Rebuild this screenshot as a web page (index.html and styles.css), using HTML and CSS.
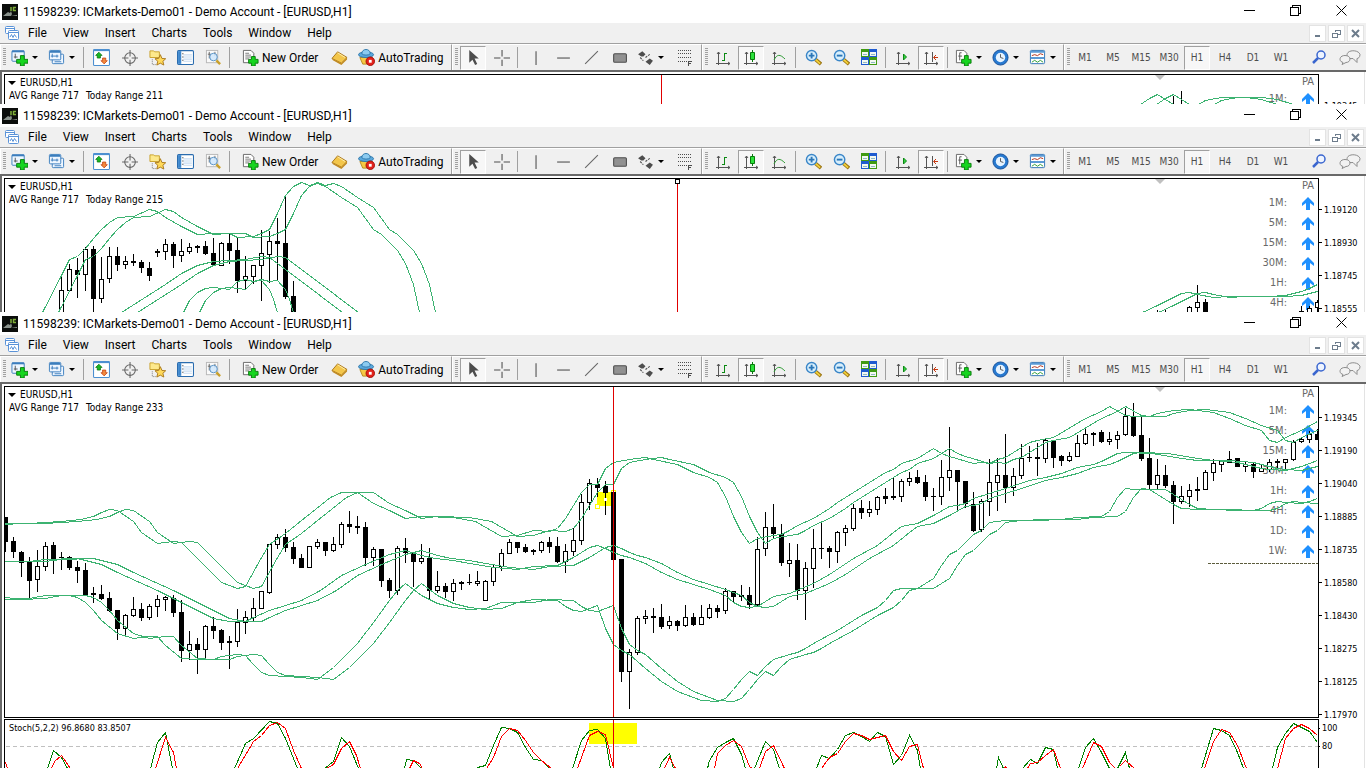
FILE: index.html
```
<!DOCTYPE html>
<html lang="en">
<head>
  <meta charset="UTF-8">
  <meta name="viewport" content="width=device-width, initial-scale=1.0">
  <title>11598239: ICMarkets-Demo01</title>
  <link rel="stylesheet" href="styles.css">
</head>
<body>
  <svg class="sprite" aria-hidden="true">
    <symbol id="i-logo" viewBox="0 0 16 16"><path fill="#0b0d0b" d="M0 0h16v16H0z"/><path fill="#8a928c" d="M1 12l5-4 2 1 1-2 1 3-1 2 6-1v1z"/><path stroke="#7fae3a" stroke-width="1.500" fill="none" d="M9 3v4M14 3.500h-2.500v3H14"/></symbol>
    <symbol id="i-mdi" viewBox="0 0 16 16"><g fill="#fff" stroke="#5b93d8"><rect x="1.500" y="1.500" width="9" height="7" rx="1"/><rect x="4.500" y="5.500" width="10" height="9" rx="1"/><path d="M1.500 3.500h9M4.500 7.500h10M6 12l1.500-2.500L9 12.500l1.500-3 2 3" fill="none"/></g></symbol>
    <symbol id="i-newchart" viewBox="0 0 18 18"><rect x="1" y="2" width="13" height="11" rx="1" fill="#eef6ff" stroke="#3b7dbd"/><path d="M1 2.500h13" stroke="#3b7dbd" stroke-width="2"/><path d="M4.500 5v5M3 8.500h4" stroke="#555"/><path d="M10 7h4v4h4v4h-4v3h-4v-3H6v-4h4z" fill="#16d51f" stroke="#087a0c"/></symbol>
    <symbol id="i-profiles" viewBox="0 0 18 18"><g fill="#eef6ff" stroke="#3b7dbd"><rect x="4.500" y="5.500" width="12" height="10" rx="1"/><rect x="1.500" y="1.500" width="12" height="10" rx="1"/><path d="M2 3h11" stroke-width="2"/></g><path d="M4.500 5v4M3 7.500h8M9.500 6v3M7 13.500h7" stroke="#3b7dbd"/></symbol>
    <symbol id="i-market" viewBox="0 0 16 16"><rect x=".5" y=".5" width="15" height="15" rx="1" fill="#fff" stroke="#4c8fd0"/><path d="M.5 1h15" stroke="#4c8fd0" stroke-width="2"/><path d="M5.500 3l3 3H7v2.500H4V6H2.500z" fill="#18b825" stroke="#08720d" stroke-width=".7"/><path d="M10.500 14l-3-3H9V8.500h3V11h1.500z" fill="#f28a3d" stroke="#c23c0c" stroke-width=".7"/></symbol>
    <symbol id="i-nav" viewBox="0 0 16 16"><g fill="none" stroke="#666"><circle cx="8.500" cy="8.500" r="5"/><path d="M8.500 1v6M8.500 10v6M1 8.500h6M10 8.500h6"/></g></symbol>
    <symbol id="i-star" viewBox="0 0 18 18"><path d="M1 2h4l1 1h5v6H1z" fill="#fde98c" stroke="#c9a12c"/><path d="M3.500 11v5.500H8" stroke="#777" stroke-dasharray="1 1" fill="none"/><path d="M12 6l1.700 4 4 .3-3 2.700 1 4L12 15l-3.700 2 1-4-3-2.700 4-.3z" fill="#ffd95a" stroke="#a9781b"/></symbol>
    <symbol id="i-data" viewBox="0 0 16 16"><rect x=".5" y="1.500" width="15" height="13" rx="1" fill="#fff" stroke="#2a6cae"/><path d="M1 2h3v12H1z" fill="#3d87cd"/><path d="M6 5.500h8M6 7.500h8M6 9.500h8M6 11.500h8" stroke="#c6dcf2"/><path d="M5 4.500h1M5 7.500h1M5 10.500h1" stroke="#333"/></symbol>
    <symbol id="i-tester" viewBox="0 0 18 18"><rect x="1.500" y="1.500" width="12" height="13" fill="#fafafa" stroke="#b8b8b8"/><path d="M4.500 3v7M10.500 3v4M3 5.500h3" stroke="#666"/><circle cx="9" cy="8.500" r="4" fill="#cfe6fb" fill-opacity=".85" stroke="#5790c4"/><path d="M12 12l4 4" stroke="#c9a02b" stroke-width="2.500"/></symbol>
    <symbol id="i-order" viewBox="0 0 18 18"><path d="M1.500 1.500h8l3 3v10h-11z" fill="#fff" stroke="#666"/><path d="M3.500 4.500h4M3.500 6.500h6M3.500 8.500h6M3.500 10.500h4" stroke="#777"/><path d="M10 8h4v3h3v4h-3v3h-4v-3H7v-4h3z" fill="#16d51f" stroke="#087a0c"/></symbol>
    <symbol id="i-gold" viewBox="0 0 18 18"><path d="M7 3l10 6-6 6-10-5z" fill="#f3c64b" stroke="#a8741a"/><path d="M1 10l10 5v2L2 12zM11 15l6-6v2l-6 6z" fill="#c18a20"/><path d="M7 4l8 5" stroke="#fff0b0"/></symbol>
    <symbol id="i-auto" viewBox="0 0 18 18"><path d="M2 9l3 7h7l3-7z" fill="#f5c944" stroke="#b98a1e"/><ellipse cx="8.500" cy="6" rx="8" ry="3" fill="#5aa8dc" stroke="#2f78ab"/><path d="M4 5c0-6 9-6 9 0-2 2-7 2-9 0z" fill="#8ccbf0" stroke="#2f78ab"/><circle cx="13" cy="13" r="4.500" fill="#e3221b" stroke="#a30f0a"/><path d="M11.500 11.500h3v3h-3z" fill="#fff"/></symbol>
    <symbol id="i-cursor" viewBox="0 0 16 16"><path d="M4 1v12l3-3 2.500 5 2-1L9 9h4z" fill="#4d4d4d"/></symbol>
    <symbol id="i-cross" viewBox="0 0 16 16"><path d="M8.500 1v6M8.500 10v6M1 8.500h6M10 8.500h6" stroke="#4d4d4d"/></symbol>
    <symbol id="i-vline" viewBox="0 0 16 16"><path d="M8.500 2v13" stroke="#4d4d4d"/></symbol>
    <symbol id="i-hline" viewBox="0 0 16 16"><path d="M2 8.500h12" stroke="#4d4d4d"/></symbol>
    <symbol id="i-trend" viewBox="0 0 16 16"><path d="M2 14L14 2" stroke="#666"/></symbol>
    <symbol id="i-rect" viewBox="0 0 16 16"><rect x="2.500" y="4.500" width="12" height="8" rx="1" fill="#919191" stroke="#4d4d4d"/></symbol>
    <symbol id="i-shapes" viewBox="0 0 16 16"><path d="M5 2l3 3-2 2H4L1 5zM12 9l3 2-3 4-4-3z" fill="#4d4d4d"/><path d="M3 8l3 3M8 8l4-3" stroke="#4d4d4d" stroke-dasharray="2 1"/></symbol>
    <symbol id="i-fibo" viewBox="0 0 17 17"><path d="M2 1.500h14M2 4.500h14M2 8.500h14M2 12.500h9" stroke="#4d4d4d" stroke-dasharray="1 1"/><path d="M12.500 17v-5M12 12.500h4M12 14.500h3" stroke="#4d4d4d" fill="none"/></symbol>
    <symbol id="i-bars" viewBox="0 0 17 17"><path d="M3.500 3v13M1 14.500h14M2 5l1.500-2L5 5M13 13l2 1.500-2 1.500" stroke="#555" fill="none"/><path d="M9.500 4v8M7 11.500h2M9.500 4.500H12" stroke="#0b8a12"/></symbol>
    <symbol id="i-candle" viewBox="0 0 17 17"><path d="M3.500 3v13M1 14.500h14M2 5l1.500-2L5 5M13 13l2 1.500-2 1.500" stroke="#555" fill="none"/><path d="M9.500 1v12" stroke="#087a0c"/><path d="M7.500 3.500h4v7h-4z" fill="#2be23a" stroke="#087a0c"/></symbol>
    <symbol id="i-line" viewBox="0 0 17 17"><path d="M3.500 3v13M1 14.500h14M2 5l1.500-2L5 5M13 13l2 1.500-2 1.500" stroke="#555" fill="none"/><path d="M3 11c3-6 6-6 11-1" stroke="#2f9b35" fill="none"/></symbol>
    <symbol id="i-zoomin" viewBox="0 0 18 18"><path d="M11 11l6 5" stroke="#9a7413" stroke-width="4"/><path d="M11 11l5 4.500" stroke="#f3d13b" stroke-width="2"/><circle cx="7" cy="7" r="5.500" fill="#d8effc" stroke="#3a86c8" stroke-width="1.500"/><path d="M4 7h6M7 4v6" stroke="#2c77b8" stroke-width="2"/></symbol>
    <symbol id="i-zoomout" viewBox="0 0 18 18"><path d="M11 11l6 5" stroke="#9a7413" stroke-width="4"/><path d="M11 11l5 4.500" stroke="#f3d13b" stroke-width="2"/><circle cx="7" cy="7" r="5.500" fill="#d8effc" stroke="#3a86c8" stroke-width="1.500"/><path d="M4 7h6" stroke="#2c77b8" stroke-width="2"/></symbol>
    <symbol id="i-tile" viewBox="0 0 17 17"><path d="M0 0h8v8H0zM8 8h8v8H8z" fill="#3f9a12"/><path d="M8 0h8v8H8zM0 8h8v8H0z" fill="#1f5bd0"/><path d="M1 3h6v4H1zM9 3h6v4H9zM1 11h6v4H1zM9 11h6v4H9z" fill="#f3f8f0"/><path d="M2 5.500h4M10 5.500h4M2 13.500h4M10 13.500h4" stroke="#8fb9c4"/></symbol>
    <symbol id="i-scroll" viewBox="0 0 17 17"><path d="M3.500 3v13M1 14.500h14M2 5l1.500-2L5 5M13 13l2 1.500-2 1.500" stroke="#555" fill="none"/><path d="M8.500 5v6l3-3z" fill="#35d042" stroke="#0b8a12"/></symbol>
    <symbol id="i-shift" viewBox="0 0 17 17"><path d="M3.500 3v13M1 14.500h14M2 5l1.500-2L5 5M9.500 3v10M13 13l2 1.500-2 1.500" stroke="#555" fill="none"/><path d="M15 8.500h-4M13 6l-2.500 2.500L13 11" stroke="#c8380f" fill="none"/></symbol>
    <symbol id="i-indicator" viewBox="0 0 18 18"><path d="M1.500 1.500h8l3 3v10h-11z" fill="#fff" stroke="#666"/><path d="M7 4H5v8M3.500 7.500h4" stroke="#555" fill="none"/><path d="M10 7h4v4h3v4h-3v3h-4v-3H7v-4h3z" fill="#16d51f" stroke="#087a0c"/></symbol>
    <symbol id="i-clock" viewBox="0 0 18 18"><circle cx="9" cy="9" r="8" fill="#2779d0" stroke="#164f96"/><circle cx="9" cy="9" r="5" fill="#e6f3ff"/><path d="M9 5.500V9l3 1" stroke="#555" fill="none"/></symbol>
    <symbol id="i-template" viewBox="0 0 18 18"><rect x="1.500" y="1.500" width="15" height="14" rx="1" fill="#fff" stroke="#2f73b5"/><path d="M1 3h16M2 9.500h14" stroke="#5b9ad5" stroke-width="2"/><path d="M3 7l3-1 3 1 3-2 3 1" stroke="#b12d15" fill="none"/><path d="M3 14l3-2 3 2 3-2 3 2" stroke="#2c9b31" fill="none"/></symbol>
    <symbol id="i-search" viewBox="0 0 17 17"><circle cx="10" cy="6" r="4" fill="#eef4ff" stroke="#3a66cf" stroke-width="1.500"/><path d="M7 9l-5 5" stroke="#3a66cf" stroke-width="2.500"/></symbol>
    <symbol id="i-chat" viewBox="0 0 22 16"><g fill="#f2f2f2" stroke="#8c8c8c"><path d="M9 3c3-3 11-2 12 2 0 3-2 4-3 4v4l-4-4c-6 1-7-4-5-6z"/><path d="M6 6c-5 0-6 4-4 6l2 1-1 2 4-2c5 0 6-7-1-7z"/></g></symbol>
    <symbol id="i-up" viewBox="0 0 12 13"><path d="M6 0l6 6v3L8 6v7H4V6L0 9V6z" fill="#1e90ff"/></symbol>
  </svg>

  <main class="desk" id="desk"></main>

  <template id="windowTemplate">
    <section class="window">
      <header class="titlebar">
        <svg class="logo"><use href="#i-logo"/></svg>
        <h1>11598239: ICMarkets-Demo01 - Demo Account - [EURUSD,H1]</h1>
        <div class="caption">
          <button type="button" aria-label="Minimize"><svg viewBox="0 0 11 11"><path d="M0 5.500h11"/></svg></button>
          <button type="button" aria-label="Restore"><svg viewBox="0 0 11 11"><path d="M.5 2.500h8v8h-8zM2.500 2.500v-2h8v8h-2"/></svg></button>
          <button type="button" aria-label="Close"><svg viewBox="0 0 11 11"><path class="smooth" d="M.5.5l10 10M10.500.5l-10 10"/></svg></button>
        </div>
      </header>

      <nav class="menubar">
        <svg class="menu-icon"><use href="#i-mdi"/></svg>
        <button type="button">File</button>
        <button type="button">View</button>
        <button type="button">Insert</button>
        <button type="button">Charts</button>
        <button type="button">Tools</button>
        <button type="button">Window</button>
        <button type="button">Help</button>
        <div class="mdi">
          <button type="button" aria-label="Minimize chart"><svg viewBox="0 0 9 9"><path d="M2 7h5" stroke-width="2"/></svg></button>
          <button type="button" aria-label="Restore chart"><svg viewBox="0 0 9 9"><path d="M.5 4.500h5v4h-5zM.5 4h5M3 3V1.500h5v4H6M3 1h5"/></svg></button>
          <button type="button" aria-label="Close chart"><svg viewBox="0 0 9 9"><path class="smooth" d="M1 1l7 7M8 1L1 8" stroke-width="2"/></svg></button>
        </div>
      </nav>

      <div class="toolbar">
        <div class="group group-main">
          <button type="button" class="tool drop" aria-label="New chart"><svg><use href="#i-newchart"/></svg></button>
          <button type="button" class="tool drop" aria-label="Profiles"><svg><use href="#i-profiles"/></svg></button>
          <span class="sep"></span>
          <button type="button" class="tool" aria-label="Market Watch"><svg><use href="#i-market"/></svg></button>
          <button type="button" class="tool" aria-label="Data Window"><svg><use href="#i-nav"/></svg></button>
          <button type="button" class="tool" aria-label="Navigator"><svg><use href="#i-star"/></svg></button>
          <button type="button" class="tool" aria-label="Terminal"><svg><use href="#i-data"/></svg></button>
          <button type="button" class="tool" aria-label="Strategy Tester"><svg><use href="#i-tester"/></svg></button>
          <span class="sep"></span>
          <button type="button" class="tool wide"><svg><use href="#i-order"/></svg>New Order</button>
          <button type="button" class="tool" aria-label="MetaEditor"><svg><use href="#i-gold"/></svg></button>
          <button type="button" class="tool wide"><svg><use href="#i-auto"/></svg>AutoTrading</button>
        </div>
        <div class="group group-draw">
          <button type="button" class="tool pressed" aria-label="Cursor"><svg><use href="#i-cursor"/></svg></button>
          <button type="button" class="tool" aria-label="Crosshair"><svg><use href="#i-cross"/></svg></button>
          <span class="sep"></span>
          <button type="button" class="tool" aria-label="Vertical line"><svg><use href="#i-vline"/></svg></button>
          <button type="button" class="tool" aria-label="Horizontal line"><svg><use href="#i-hline"/></svg></button>
          <button type="button" class="tool" aria-label="Trendline"><svg><use href="#i-trend"/></svg></button>
          <button type="button" class="tool" aria-label="Rectangle"><svg><use href="#i-rect"/></svg></button>
          <button type="button" class="tool drop" aria-label="Arrows"><svg><use href="#i-shapes"/></svg></button>
          <button type="button" class="tool" aria-label="Fibonacci"><svg><use href="#i-fibo"/></svg></button>
        </div>
        <div class="group group-charts">
          <button type="button" class="tool" aria-label="Bar chart"><svg><use href="#i-bars"/></svg></button>
          <button type="button" class="tool pressed" aria-label="Candlesticks"><svg><use href="#i-candle"/></svg></button>
          <button type="button" class="tool" aria-label="Line chart"><svg><use href="#i-line"/></svg></button>
          <span class="sep"></span>
          <button type="button" class="tool" aria-label="Zoom in"><svg><use href="#i-zoomin"/></svg></button>
          <button type="button" class="tool" aria-label="Zoom out"><svg><use href="#i-zoomout"/></svg></button>
          <button type="button" class="tool" aria-label="Tile windows"><svg><use href="#i-tile"/></svg></button>
          <span class="sep"></span>
          <button type="button" class="tool" aria-label="Auto scroll"><svg><use href="#i-scroll"/></svg></button>
          <button type="button" class="tool pressed" aria-label="Chart shift"><svg><use href="#i-shift"/></svg></button>
          <span class="sep"></span>
          <button type="button" class="tool drop" aria-label="Indicators"><svg><use href="#i-indicator"/></svg></button>
          <button type="button" class="tool drop" aria-label="Periods"><svg><use href="#i-clock"/></svg></button>
          <button type="button" class="tool drop" aria-label="Templates"><svg><use href="#i-template"/></svg></button>
        </div>
        <div class="group group-periods">
          <button type="button" class="tool">M1</button>
          <button type="button" class="tool">M5</button>
          <button type="button" class="tool">M15</button>
          <button type="button" class="tool">M30</button>
          <button type="button" class="tool pressed">H1</button>
          <button type="button" class="tool">H4</button>
          <button type="button" class="tool">D1</button>
          <button type="button" class="tool">W1</button>
          <div class="right-tools">
            <button type="button" class="tool" aria-label="Search"><svg><use href="#i-search"/></svg></button>
            <button type="button" class="tool" aria-label="Chat"><svg class="chat"><use href="#i-chat"/></svg></button>
          </div>
        </div>
      </div>

      <div class="chart">
        <div class="pane pane-main">
          <div class="plot">
            <div class="info">
              <p class="symbol">EURUSD,H1</p>
              <p class="range"><span>AVG Range 717</span><span class="today"></span></p>
            </div>
            <span class="shift-mark"></span>
            <div class="signals">
              <span></span><span class="pa">PA</span>
            </div>
            <svg class="drawing"></svg>
          </div>
          <div class="axis"></div>
        </div>
      </div>
    </section>
  </template>

  <template id="stochTemplate">
    <div class="pane pane-stoch">
      <div class="plot">
        <p class="stoch-title">Stoch(5,2,2) 96.8680 83.8507</p>
        <svg class="drawing"></svg>
      </div>
      <div class="axis stoch-axis"><span>100</span><span>80</span></div>
    </div>
  </template>

  <script src="script.js"></script>
</body>
</html>
```
FILE: styles.css
```
* {
  box-sizing: border-box;
}
body {
  margin: 0;
  background-color: #fff;
  color: #000;
  font-family: Roboto, "Open Sans", sans-serif;
  font-size: 12px;
}
h1, p {
  margin: 0;
  font-weight: normal;
}
button {
  margin: 0;
  padding: 0;
  border: none;
  background: none;
  color: inherit;
  font: inherit;
}
.sprite {
  display: none;
}
.desk {
  display: flex;
  flex-direction: column;
  height: 100vh;
  overflow: hidden;
}
.window {
  display: flex;
  flex-direction: column;
  flex: 13 1 0;
  min-height: 0;
  overflow: hidden;
  background-color: #fff;
}
.window.medium {
  flex-grow: 26;
}
.window.large {
  flex-grow: 57;
}

/* title bar */
.titlebar {
  display: flex;
  flex: none;
  align-items: center;
  height: 23px;
  padding-left: 2px;
}
.logo {
  width: 16px;
  height: 16px;
  margin-right: 5px;
}
.titlebar h1 {
  font-size: 12px;
  line-height: 22px;
  white-space: pre;
}
.caption {
  display: flex;
  margin-left: auto;
  padding-right: 2px;
}
.caption button {
  width: 46px;
  height: 21px;
}
.caption svg {
  width: 11px;
  height: 11px;
  fill: none;
  stroke: #000;
  shape-rendering: crispEdges;
}
.caption .smooth, .mdi .smooth {
  shape-rendering: auto;
}

/* menu */
.menubar {
  display: flex;
  flex: none;
  align-items: center;
  height: 20px;
  padding: 0 2px 0 4px;
  background-color: #f0f0f0;
}
.menu-icon {
  width: 16px;
  height: 16px;
}
.menubar > button {
  padding: 0 8px;
  line-height: 20px;
}
.mdi {
  display: flex;
  gap: 2px;
  margin-left: auto;
}
.mdi button {
  display: flex;
  align-items: center;
  justify-content: center;
  width: 17px;
  height: 17px;
  border: 1px solid #e3e3e3;
  background-color: #fff;
}
.mdi svg {
  width: 9px;
  height: 9px;
  fill: none;
  stroke: #6d7c8c;
  shape-rendering: crispEdges;
}

/* toolbar */
.toolbar {
  display: flex;
  flex: none;
  height: 29px;
  border-top: 1px solid #a0a0a0;
  border-bottom: 2px solid #696969;
  background-color: #f0f0f0;
}
.group {
  display: flex;
  flex: none;
  align-items: center;
  padding-left: 6px;
  border-left: 1px solid #fff;
  border-top: 1px solid #fff;
  border-right: 1px solid #a0a0a0;
  background-image: repeating-linear-gradient(#a0a0a0 0 1px, #f0f0f0 1px 2px);
  background-repeat: no-repeat;
  background-size: 3px 18px;
  background-position: 2px 3px;
}
.group-main {
  width: 452px;
}
.group-draw {
  width: 250px;
}
.group-charts {
  width: 362px;
}
.group-periods {
  flex: 1;
  border-right: none;
  color: #4d4d4d;
  font-family: "DejaVu Sans Condensed", "DejaVu Sans", sans-serif;
  font-size: 10px;
}
.tool {
  display: flex;
  flex: none;
  align-items: center;
  justify-content: center;
  width: 26px;
  height: 24px;
  margin: 0 1px;
}
.tool svg {
  flex: none;
  width: 17px;
  height: 17px;
}
.tool svg.chat {
  width: 22px;
}
.tool.drop {
  justify-content: flex-start;
  width: 37px;
  margin: 0;
  padding-left: 4px;
}
.tool.drop::after {
  content: "";
  margin-left: 4px;
  border: 3px solid transparent;
  border-top-color: #000;
  border-bottom: none;
}
.tool.wide {
  gap: 3px;
  width: auto;
  padding: 0 6px 0 8px;
  white-space: nowrap;
}
.tool.wide:last-child {
  padding: 0 4px;
}
.tool.pressed {
  border: 1px solid;
  border-color: #a0a0a0 #fff #fff #a0a0a0;
  background-color: #f7f7f7;
}
.sep {
  width: 1px;
  height: 21px;
  margin: 0 3px 0 2px;
  background-color: #a0a0a0;
}
.right-tools {
  display: flex;
  gap: 3px;
  margin-left: auto;
  padding-right: 2px;
}

/* chart */
.chart {
  display: flex;
  flex: 1;
  flex-direction: column;
  gap: 1px;
  min-height: 0;
  margin-right: 1px;
  padding: 2px 0 0 2px;
  border-left: 2px solid #696969;
  border-right: 1px solid #e3e3e3;
  font-family: "DejaVu Sans Condensed", "DejaVu Sans", sans-serif;
  font-size: 10px;
}
.pane {
  display: flex;
  min-height: 0;
}
.pane-main {
  flex: 1;
}
.pane-stoch {
  flex: 0 0 49px;
}
.plot {
  position: relative;
  display: flex;
  flex: 1;
  justify-content: space-between;
  min-width: 0;
  overflow: hidden;
  border: 1px solid #000;
  border-bottom: none;
}
.large .pane-main .plot {
  border-bottom: 1px solid #000;
}
.drawing {
  position: absolute;
  top: 0;
  left: 0;
  width: 100%;
  height: 100%;
  shape-rendering: crispEdges;
}
.info p {
  display: flex;
  padding-left: 4px;
  line-height: 13px;
  white-space: nowrap;
}
.info .range {
  gap: 7px;
}
.info .symbol {
  align-items: center;
  gap: 4px;
  padding: 2px 0 0 3px;
  line-height: 12px;
}
.symbol::before {
  content: "";
  border: 4px solid transparent;
  border-top-color: #000;
  border-bottom: none;
}
.shift-mark {
  position: absolute;
  top: 0;
  right: 153px;
  border: 5px solid transparent;
  border-top-color: #c0c0c0;
  border-bottom: none;
}
.signals {
  display: grid;
  grid-template-columns: 40px 14px;
  grid-template-rows: 13px;
  grid-auto-rows: 20px;
  column-gap: 13px;
  align-items: center;
  align-content: start;
  justify-items: end;
  padding-right: 4px;
  color: #696969;
  font-size: 11px;
}
.signals svg {
  width: 12px;
  height: 13px;
  margin-top: 3px;
}
.axis {
  flex: 0 0 45px;
  padding-top: 15px;
  font-family: "DejaVu Sans Condensed", "DejaVu Sans", sans-serif;
  font-size: 9px;
}
.axis span {
  display: flex;
  align-items: center;
  gap: 2px;
  height: 33px;
}
.axis span::before {
  content: "";
  width: 3px;
  height: 1px;
  background-color: #000;
}
.stoch-title {
  padding: 2px 0 0 4px;
  font-size: 9px;
  line-height: 13px;
}
.stoch-axis {
  padding-top: 0;
}
.stoch-axis span {
  height: 18px;
}
.stoch-axis span::before {
  width: 1px;
}

/* drawing */
.wick {
  fill: #000;
}
.hollow {
  fill: #fff;
}
.band, .main-line, .signal-line {
  fill: none;
  stroke: #3cb371;
}
.main-line {
  stroke: #008000;
}
.signal-line {
  stroke: #f00;
}
.marker {
  fill: #ff0;
}
.handle {
  fill: #fff;
  stroke: #ff0;
}
.cross-handle {
  fill: #fff;
  stroke: #000;
}
.vertical {
  stroke: #e00000;
}
.level {
  stroke: #c0c0c0;
  stroke-dasharray: 4 3;
}
.support {
  stroke: #5c5c3c;
  stroke-dasharray: 3 1;
}
```
FILE: script.js
```
const desk = document.getElementById('desk');
const windowTemplate = document.getElementById('windowTemplate');
const stochTemplate = document.getElementById('stochTemplate');

const STEP = 8;
const PERIODS = ['1M', '5M', '15M', '30M', '1H', '4H', '1D', '1W'];

// runs of bars: x of the first bar, then "high top bottom low" per bar, + marks a rising bar
const charts = [
  {
    range: 211, top: 75, vertical: 661, periods: 1,
    prices: ['1.19345'],
    runs: [[1173, '96 110 120 120, 91 110 120 120']],
    bands: ['1133,110 1140,104 1149,98 1157,94 1165,99 1173,104 1185,112 1193,108 1198,104 1205,100 1221,97 1245,97 1261,99 1277,104 1290,110']
  },
  {
    size: 'medium', range: 215, top: 179, vertical: 677, handle: true, periods: 6,
    prices: ['1.19120', '1.18930', '1.18745', '1.18555'],
    runs: [
      [61, `275 290 320 320+, 264 269 291 291+, 258 270 275 298, 247 249 275 291+, 246 249 299 312, 257 279 299 303+,
        247 256 279 283+, 247 256 265 271, 256 261 265 269+, 254 261 263 266, 260 262 268 273, 262 268 276 281,
        249 251 253 257, 239 244 252 260+, 242 244 256 268, 239 251 256 262+, 243 247 252 254+, 245 246 248 253,
        241 246 254 255, 238 253 265 266, 242 243 266 266+, 234 243 251 264, 238 250 281 293, 256 276 281 289+,
        265 265 277 284+, 230 253 266 301+, 231 241 255 283+, 218 241 244 280, 196 243 297 299, 281 296 330 330`],
      [1157, '310 313 330 330, 310 313 330 330'],
      [1189, '306 307 320 320+, 285 302 308 320+, 299 302 330 330'],
      [1301, '306 311 330 330, 306 308 320 320+, 300 302 308 312+']
    ],
    bands: [
      '36,325 42,312 61,275 69,259 77,256 85,248 93,238 101,229 109,222 117,217 133,216 149,209 157,211 165,217 181,226 197,234 213,233 229,233 237,237 253,236 261,233 269,229 277,213 285,195 293,186 301,182 309,185 317,183 325,186 341,197 357,207 373,229 381,234 397,250 405,263 413,284 419,312 422,325',
      '105,325 121,312 165,284 181,273 197,265 213,261 229,260 245,259 261,256 269,257 285,269 301,281 342,312 360,325',
      '178,325 183,312 189,300 197,292 205,288 213,287 229,289 237,281 245,279 253,281 261,280 269,289 273,299 277,312 280,325',
      '1120,323 1142,312 1157,305 1181,293 1189,292 1197,294 1213,297 1229,296 1269,296 1285,295 1293,293 1301,291 1309,288 1317,284'
    ]
  },
  {
    size: 'large', range: 233, top: 387, vertical: 613, stoch: true, periods: 8,
    prices: ['1.19345', '1.19190', '1.19040', '1.18885', '1.18735', '1.18580', '1.18430', '1.18275', '1.18125', '1.17970'],
    runs: [[5, `517 517 542 552, 537 541 552 558, 551 552 563 577, 557 561 581 598, 550 566 580 592+, 542 546 567 571+,
      542 545 560 574, 552 557 558 570, 556 557 568 570, 561 567 571 583, 563 570 595 595, 587 593 595 603,
      585 594 599 600, 592 598 611 612, 610 610 629 640, 614 615 629 636+, 597 609 616 617+, 603 609 618 621,
      604 606 618 620+, 595 599 607 617+, 596 597 600 611+, 595 598 613 617, 600 612 651 662, 631 644 651 660+,
      638 644 650 674, 625 626 650 659+, 617 626 631 639, 629 630 643 650, 636 641 643 669, 609 622 642 647+,
      611 617 623 634+, 598 608 618 621+, 591 591 609 609+, 544 544 593 594+, 534 537 545 549+, 529 537 548 552,
      542 547 559 564, 554 558 568 568, 546 546 568 568+, 539 542 547 549+, 542 542 551 556, 537 544 551 552+,
      522 524 545 548+, 511 524 527 533, 516 526 528 534, 522 527 558 566, 547 549 558 566+, 549 549 581 587,
      578 580 591 598, 546 548 591 595+, 538 548 553 563, 552 553 562 587, 544 558 562 564+, 548 558 591 600,
      571 586 591 593+, 583 586 592 598, 579 583 592 601+, 581 582 584 590, 574 582 583 585, 571 581 584 586+,
      580 581 601 601+, 565 567 582 586+, 549 553 567 571+, 539 542 554 554+, 542 542 548 553, 544 547 552 553,
      549 550 552 555, 541 542 551 553+, 537 542 547 553, 537 546 562 563, 544 551 562 573+, 528 540 552 556+,
      494 502 541 545+, 479 483 503 510+, 478 484 488 497, 481 486 493 515, 492 492 560 560, 559 559 672 682,
      649 652 672 709+, 616 618 653 655+, 610 616 619 624+, 608 616 618 633, 604 617 627 629, 616 621 626 629+,
      620 621 626 631, 605 617 626 627+, 613 617 625 626, 605 617 625 625+, 604 608 618 619+, 605 608 612 618,
      588 591 611 614+, 591 591 597 602, 585 595 597 601, 587 595 605 609, 537 549 605 606+, 512 527 549 556+,
      504 527 534 538, 524 534 563 566, 543 560 564 577+, 544 560 591 600, 562 568 591 620+, 529 548 569 588+,
      521 548 549 559, 546 548 552 568, 531 532 552 563+, 525 528 533 546+, 504 508 529 531+, 500 508 513 519,
      501 509 513 517+, 496 497 510 515+, 488 496 499 504, 478 496 498 500, 479 481 497 502+, 472 478 482 486+,
      470 477 483 484, 475 482 497 501, 488 496 497 511, 460 477 497 505+, 427 470 478 491+, 470 470 482 510,
      481 481 504 508, 492 504 531 532, 499 501 530 532+, 459 482 502 516+, 458 475 483 511+, 434 475 488 503,
      468 476 488 496+, 444 458 476 479+, 446 457 458 462, 443 457 459 476, 439 440 459 463+, 440 440 458 468,
      455 456 461 466, 452 456 461 462+, 435 443 457 457+, 428 434 444 445+, 432 433 435 446, 430 432 442 443,
      432 439 442 445+, 431 435 440 449+, 408 416 435 436+, 403 416 436 437, 416 435 459 461, 438 458 485 489,
      459 475 485 489+, 465 475 486 488, 481 485 502 524, 486 496 502 504+, 484 490 497 507+, 477 489 491 501,
      470 472 490 490+, 459 463 473 481+, 460 461 465 472+, 451 459 463 463+, 458 458 467 467, 462 464 467 472+,
      462 464 472 478, 464 468 472 472+, 459 462 470 472+, 459 461 463 470, 459 459 463 471+, 440 442 460 461+,
      437 439 442 443+, 431 434 440 443+, 429 434 440 440`]],
    bands: [
      '-11,524 5,523 29,523 61,521 80,519 93,516 101,512 109,509 117,510 133,521 141,532 157,543 173,541 181,542 189,550 221,582 237,588 245,586 261,557 269,544 285,533 301,520 330,497 341,492 357,492 373,503 389,510 405,518 421,516 453,517 475,521 501,536 517,535 533,530 549,531 557,528 565,518 573,505 581,492 589,484 597,484 605,468 613,462 629,459 645,457 653,459 677,464 693,472 709,477 717,482 725,496 733,516 741,532 749,543 757,538 773,535 781,534 789,530 797,525 813,518 829,508 837,502 861,487 885,472 893,469 901,463 917,458 933,448 941,453 949,456 973,463 981,462 989,463 997,459 1005,457 1029,442 1037,440 1053,437 1085,418 1101,411 1109,406 1125,415 1133,416 1149,416 1157,413 1173,410 1189,409 1213,412 1229,418 1245,425 1261,430 1269,440 1277,442 1285,437 1301,430 1317,421',
      '-11,561 5,561 29,561 45,559 77,558 85,560 101,564 117,572 157,590 213,618 229,621 245,621 253,617 269,610 301,600 320,590 341,575 365,564 389,554 405,550 421,555 435,558 453,560 469,563 493,567 517,569 533,566 557,565 573,557 589,547 597,545 605,548 613,552 621,555 629,557 645,563 661,572 677,579 709,589 725,595 733,602 741,606 749,607 757,606 773,596 789,593 813,583 829,574 853,558 877,545 893,532 901,526 917,523 933,515 949,506 957,505 965,503 973,498 1005,488 1029,480 1045,477 1061,473 1077,467 1093,464 1101,461 1117,453 1125,452 1151,453 1181,458 1197,460 1213,460 1237,462 1253,466 1261,468 1269,469 1285,470 1301,466 1317,460',
      '-11,597 5,599 29,598 45,595 69,595 77,597 85,602 93,610 101,620 117,633 133,638 149,636 157,636 165,645 181,658 197,659 213,659 221,656 237,654 245,655 253,664 261,672 269,675 301,677 317,679 333,667 357,643 373,622 389,600 397,590 405,583 413,589 421,595 437,603 453,607 469,609 485,608 501,602 517,602 533,599 557,600 565,606 573,610 581,611 589,608 597,605 605,628 613,644 621,650 629,654 645,668 661,681 677,691 693,697 701,700 717,701 725,698 733,689 741,679 749,671 757,675 765,666 773,659 789,654 797,652 805,648 813,643 837,630 853,620 861,615 877,607 885,600 893,590 901,588 917,588 933,578 941,565 949,554 957,550 965,542 973,534 981,530 989,522 997,521 1005,520 1061,519 1077,517 1101,516 1109,511 1117,497 1125,488 1133,489 1149,489 1157,494 1173,504 1181,508 1197,509 1253,510 1261,508 1269,503 1277,501 1285,502 1301,503 1309,501 1317,498'
    ]
  }
];

const stoch = {
  top: 720,
  main: ['47,768 53,750 61,757 67,768', '150,768 157,742 165,732 172,768',
    '234,768 245,743 253,738 269,721 277,723 285,738 297,768', '324,768 333,761 341,737 349,746 358,768',
    '404,768 406,759 413,760 421,768', '477,767 485,765 493,745 501,727 509,728 517,732 525,747 533,759 541,760 549,768',
    '572,768 581,740 589,730 597,729 605,738 610,768', '659,768 661,762 669,753 673,768',
    '707,768 709,760 717,747 725,742 733,738 741,754 745,768', '754,768 765,741 773,749 779,768',
    '816,768 821,755 829,758 837,749 845,735 853,732 861,736 869,741 877,732 885,736 893,764 901,755 909,735 917,750 920,768',
    '996,768 998,757 1003,768', '1022,768 1030,759 1037,763 1045,747 1053,749 1057,768',
    '1078,768 1085,747 1093,738 1101,752 1109,768', '1117,768 1125,752 1129,768',
    '1201,768 1213,728 1221,730 1229,735 1237,752 1243,768', '1272,768 1277,747 1285,733 1293,723 1301,727 1309,731 1317,742'],
  signal: ['5,762 7,768', '51,768 54,761 61,755 70,768', '155,768 165,737 173,752 176,768',
    '237,768 253,741 261,735 269,725 277,722 285,728 293,750 301,768', '326,768 333,764 341,748 349,741 356,755 360,768',
    '409,768 413,760 419,763 422,768', '486,768 493,757 501,736 509,728 517,730 525,740 533,752 541,760 551,768',
    '577,768 589,735 597,731 605,734 613,768', '664,768 669,757 675,768',
    '714,768 717,753 725,745 733,740 741,746 749,766 752,768', '759,768 765,751 773,745 784,768',
    '821,768 829,757 837,753 845,741 853,733 861,735 869,739 877,737 885,735 893,751 901,760 909,746 917,744 923,768',
    '1004,768 1005,766 1007,768', '1027,768 1030,763 1037,762 1045,755 1053,749 1060,768',
    '1082,768 1093,742 1101,746 1109,762 1115,768', '1119,766 1125,760 1134,768',
    '1204,768 1213,741 1221,729 1229,732 1237,745 1246,768', '1277,768 1285,738 1293,728 1301,724 1309,728 1317,735']
};

function box(x, y, w, h) {
  return `M${x} ${y}h${w}v${h}h${-w}z`;
}

function drawCandles(runs) {
  let solid = '';
  let hollow = '';
  runs.forEach(([start, text]) => {
    text.split(',').forEach((bar, index) => {
      const x = start + index * STEP;
      const [high, top, bottom, low] = bar.trim().split(' ').map(v => parseInt(v));
      solid += box(x, high, 1, low - high) + box(x - 2, top, 5, bottom - top);
      if (bar.includes('+')) {
        hollow += box(x - 1, top + 1, 3, bottom - top - 2);
      }
    });
  });
  return `<path class="wick" d="${solid}"/><path class="hollow" d="${hollow}"/>`;
}

// every band is drawn twice, the second copy two bars later
function drawBands(bands) {
  return bands.map(points => `
    <polyline class="band" transform="translate(.5 .5)" points="${points}"/>
    <polyline class="band" transform="translate(16.5 .5)" points="${points}"/>
  `).join('');
}

function drawLines(lines, name) {
  return lines.map(points => `<polyline class="${name}" transform="translate(.5 .5)" points="${points}"/>`).join('');
}

function drawMain(chart) {
  let svg = `<g transform="translate(-5 ${-chart.top})">`;
  if (chart.stoch) {
    svg += `<path class="marker" d="${box(597, 492, 14, 14)}"/>
      <path class="handle" d="M595.5 504.500h4v4h-4zM611.5 490.500h4v4h-4z"/>`;
  }
  svg += drawCandles(chart.runs) + drawBands(chart.bands);
  if (chart.stoch) {
    svg += `<path class="hollow" d="${box(604, 498, 3, 3)}"/><path class="support" d="M1208 563.5h110"/>`;
  }
  svg += `<path class="vertical" d="M${chart.vertical}.5 ${chart.top}v700"/>`;
  if (chart.handle) {
    svg += `<path class="cross-handle" d="M675.5 179.500h4v4h-4z"/>`;
  }
  return svg + '</g>';
}

function drawStoch() {
  return `<g transform="translate(-5 ${-stoch.top})">
    <path class="marker" d="${box(589, 723, 48, 21)}"/>
    <path class="level" d="M6 746.5h1312"/>
    ${drawLines(stoch.main, 'main-line')}
    ${drawLines(stoch.signal, 'signal-line')}
    <path class="vertical" d="M613.5 720v80"/>
  </g>`;
}

charts.forEach(chart => {
  const win = windowTemplate.content.cloneNode(true);
  if (chart.size) {
    win.querySelector('.window').classList.add(chart.size);
  }
  win.querySelector('.today').textContent = `Today Range ${chart.range}`;
  win.querySelector('.signals').innerHTML += PERIODS.slice(0, chart.periods).map(period => `
    <span>${period}:</span><svg><use href="#i-up"/></svg>
  `).join('');
  win.querySelector('.axis').innerHTML = chart.prices.map(price => `<span>${price}</span>`).join('');
  win.querySelector('.drawing').innerHTML = drawMain(chart);
  if (chart.stoch) {
    const pane = stochTemplate.content.cloneNode(true);
    pane.querySelector('.drawing').innerHTML = drawStoch();
    win.querySelector('.chart').appendChild(pane);
  }
  desk.appendChild(win);
});
```
